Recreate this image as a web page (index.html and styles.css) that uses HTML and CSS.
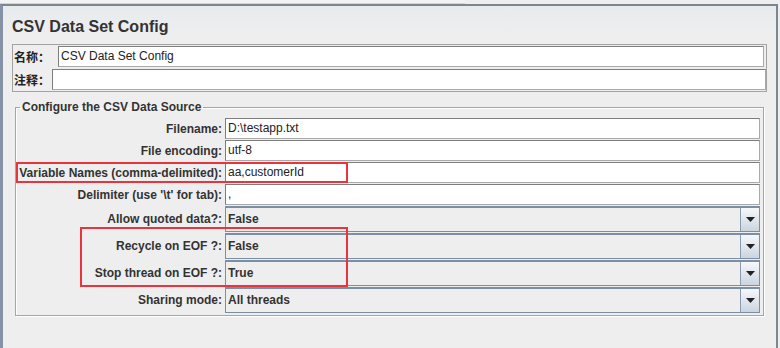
FILE: index.html
```html
<!DOCTYPE html>
<html lang="en">
  <head>
    <meta charset="UTF-8" />
    <title>CSV Data Set Config</title>
    <link rel="stylesheet" href="styles.css">
  </head>
  <body>
    <div class="tabs"></div>
    <div class="panel">
      <h1 class="title">CSV Data Set Config</h1>

      <div class="namebox">
        <div class="name-row">
          <span class="cjk name-label">名称：</span>
          <div class="field name-field">CSV Data Set Config</div>
        </div>
        <div class="name-row">
          <span class="cjk comment-label">注释：</span>
          <div class="field comment-field"></div>
        </div>
      </div>

      <fieldset class="group">
        <legend>Configure the CSV Data Source</legend>
        <div class="form">
          <span class="label">Filename:</span>
          <div class="field">D:\testapp.txt</div>

          <span class="label">File encoding:</span>
          <div class="field">utf-8</div>

          <span class="label">Variable Names (comma-delimited):</span>
          <div class="field">aa,customerId</div>

          <span class="label">Delimiter (use '\t' for tab):</span>
          <div class="field">,</div>

          <span class="label">Allow quoted data?:</span>
          <div class="combo">
            <span class="combo-value">False</span>
            <span class="arrow"><svg width="9" height="5" viewBox="0 0 9 5"><polygon points="0,0 9,0 4.5,5" fill="#222"/></svg></span>
          </div>

          <span class="label">Recycle on EOF ?:</span>
          <div class="combo">
            <span class="combo-value">False</span>
            <span class="arrow"><svg width="9" height="5" viewBox="0 0 9 5"><polygon points="0,0 9,0 4.5,5" fill="#222"/></svg></span>
          </div>

          <span class="label">Stop thread on EOF ?:</span>
          <div class="combo">
            <span class="combo-value">True</span>
            <span class="arrow"><svg width="9" height="5" viewBox="0 0 9 5"><polygon points="0,0 9,0 4.5,5" fill="#222"/></svg></span>
          </div>

          <span class="label">Sharing mode:</span>
          <div class="combo">
            <span class="combo-value">All threads</span>
            <span class="arrow"><svg width="9" height="5" viewBox="0 0 9 5"><polygon points="0,0 9,0 4.5,5" fill="#222"/></svg></span>
          </div>
        </div>
      </fieldset>
    </div>

    <!-- red highlight boxes drawn over the form -->
    <div class="mark mark-vars"></div>
    <div class="mark mark-eof"></div>
  </body>
</html>
```

FILE: styles.css
```css
body {
  margin: 0;
  background: #eeeeee;
  font-family: "Liberation Sans", Arial, sans-serif;
  font-size: 12px;
  color: #333333;
  height: 348px;
  overflow: hidden;
}
.cjk {
  font-family: "Noto Sans CJK SC", sans-serif;
}
.tabs {
  height: 4px;
  width: 465px;
  background: #f3f3f3;
  box-shadow: inset 0 -1px 0 #d4d4d4;
}
.panel {
  height: 342px;
  margin-right: 2px;
  border-top: 2px solid #7c868f;
  border-left: 3px solid #8591a4;
  border-right: 2px solid #7c868f;
  background: linear-gradient(#e7ebee, #eeeeee 30px);
  padding-top: 11px;
}
.title {
  margin: 0 0 7px 9px;
  font-size: 16px;
  line-height: 20px;
  font-weight: bold;
  color: #333333;
}

/* name / comment box */
.namebox {
  margin: 0 9px;
  height: 48px;
  box-sizing: border-box;
  border: 1px solid #a3a3a3;
  padding-top: 1px;
  display: flex;
  flex-direction: column;
  gap: 2px;
}
.name-row {
  display: flex;
  align-items: center;
}
.name-label,
.comment-label {
  font-weight: bold;
  font-size: 12px;
  line-height: 16px;
  color: #222222;
  padding-left: 1px;
}
.name-label {
  width: 44px;
}
.comment-label {
  width: 38px;
}
.name-field {
  flex: 1;
  height: 20px;
  margin-right: 2px;
}
.comment-field {
  flex: 1;
  height: 22px;
  border-color: #d4d4d4;
}

/* csv source group */
.group {
  margin: 8px 12px 0 12px;
  padding: 3px 3px 2px 1px;
  border: 1px solid #a5a5a5;
  box-shadow: 1px 1px 0 #ffffff, inset 1px 1px 0 #ffffff;
  min-inline-size: 0;
}
.group legend {
  margin-left: 3px;
  padding: 0 2px;
  font-weight: bold;
  line-height: 15px;
  color: #333333;
}
.form {
  display: grid;
  grid-template-columns: 205px 1fr;
  column-gap: 3px;
  row-gap: 1px;
}
.label {
  align-self: center;
  text-align: right;
  font-weight: bold;
  color: #333333;
  white-space: nowrap;
}
.field {
  box-sizing: border-box;
  height: 21px;
  border: 1px solid #7d7d7d;
  border-right-color: #a9a9a9;
  border-bottom-color: #a9a9a9;
  background: #ffffff;
  padding: 0 2px;
  line-height: 19px;
  color: #222222;
  white-space: nowrap;
}
.combo {
  box-sizing: border-box;
  height: 26px;
  display: flex;
  border: 1px solid #7b8ea3;
  border-top-width: 2px;
  background: #eeeeee;
}
.combo-value {
  flex: 1;
  padding-left: 2px;
  line-height: 23px;
  font-weight: bold;
  color: #333333;
}
.arrow {
  width: 18px;
  display: flex;
  align-items: center;
  justify-content: center;
  border-left: 1px solid #8b9bb0;
  background: linear-gradient(#f6f8fa, #cbd5e0);
}

/* highlight overlays */
.mark {
  position: absolute;
  border: 2px solid #e8353d;
  box-sizing: border-box;
}
.mark-vars {
  left: 16px;
  top: 162px;
  width: 332px;
  height: 21px;
}
.mark-eof {
  left: 80px;
  top: 227px;
  width: 268px;
  height: 60px;
}
```
